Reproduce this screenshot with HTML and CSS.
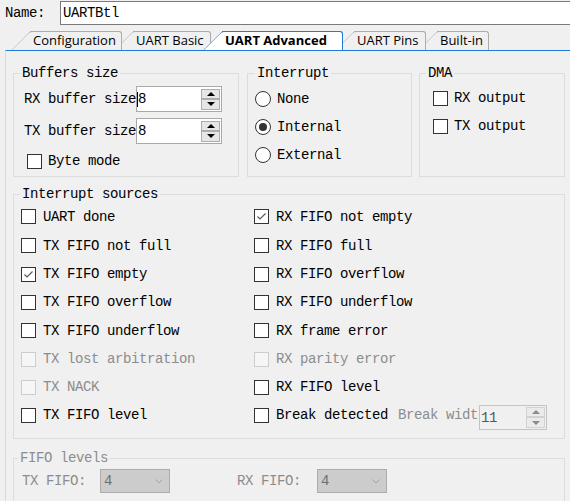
FILE: index.html
```html
<!DOCTYPE html>
<html>
<head>
<meta charset="utf-8">
<link rel="stylesheet" href="styles.css">
</head>
<body>
<div class="name-row">
  <span class="name-label">Name:</span>
  <div class="name-input">UARTBtl</div>
</div>
<div class="tabs">
  <div class="tab t1">Configuration</div>
  <div class="tab t2">UART Basic</div>
  <div class="tab t3 active">UART Advanced</div>
  <div class="tab t4">UART Pins</div>
  <div class="tab t5">Built-in</div>
</div>
<div class="panel">
  <div class="top-groups">
    <fieldset class="group buffers">
      <legend>Buffers size</legend>
      <div class="spin-row">
        <span class="spin-label">RX buffer size</span>
        <div class="spin"><span class="caret"></span><span class="val">8</span><div class="btns"><span class="btn up"></span><span class="btn down"></span></div></div>
      </div>
      <div class="spin-row">
        <span class="spin-label">TX buffer size</span>
        <div class="spin"><span class="val">8</span><div class="btns"><span class="btn up"></span><span class="btn down"></span></div></div>
      </div>
      <label class="check byte"><span class="cb"></span>Byte mode</label>
    </fieldset>
    <fieldset class="group interrupt">
      <legend>Interrupt</legend>
      <label class="radio-row"><span class="radio"></span>None</label>
      <label class="radio-row"><span class="radio on"></span>Internal</label>
      <label class="radio-row"><span class="radio"></span>External</label>
    </fieldset>
    <fieldset class="group dma">
      <legend>DMA</legend>
      <label class="check dma-row"><span class="cb"></span>RX output</label>
      <label class="check dma-row"><span class="cb"></span>TX output</label>
    </fieldset>
  </div>
  <fieldset class="group sources">
    <legend>Interrupt sources</legend>
    <div class="src-grid">
      <label class="check"><span class="cb"></span>UART done</label>
      <label class="check"><span class="cb on"><svg viewBox="0 0 13 13"><path d="M2.5 6.5 L5 9 L10.5 3.5"/></svg></span>RX FIFO not empty</label>
      <label class="check"><span class="cb"></span>TX FIFO not full</label>
      <label class="check"><span class="cb"></span>RX FIFO full</label>
      <label class="check"><span class="cb on"><svg viewBox="0 0 13 13"><path d="M2.5 6.5 L5 9 L10.5 3.5"/></svg></span>TX FIFO empty</label>
      <label class="check"><span class="cb"></span>RX FIFO overflow</label>
      <label class="check"><span class="cb"></span>TX FIFO overflow</label>
      <label class="check"><span class="cb"></span>RX FIFO underflow</label>
      <label class="check"><span class="cb"></span>TX FIFO underflow</label>
      <label class="check"><span class="cb"></span>RX frame error</label>
      <label class="check disabled"><span class="cb"></span>TX lost arbitration</label>
      <label class="check disabled"><span class="cb"></span>RX parity error</label>
      <label class="check disabled"><span class="cb"></span>TX NACK</label>
      <label class="check"><span class="cb"></span>RX FIFO level</label>
      <label class="check"><span class="cb"></span>TX FIFO level</label>
      <div class="break-row">
        <label class="check"><span class="cb"></span>Break detected</label>
        <span class="break-label">Break width</span>
        <div class="spin small disabled"><span class="val">11</span><div class="btns"><span class="btn up"></span><span class="btn down"></span></div></div>
      </div>
    </div>
  </fieldset>
  <fieldset class="group fifo">
    <legend>FIFO levels</legend>
    <div class="fifo-row">
      <span class="fifo-label tx">TX FIFO:</span>
      <div class="combo"><span>4</span><svg viewBox="0 0 8 5"><path d="M0.5 0.5 L4 4 L7.5 0.5"/></svg></div>
      <span class="fifo-label rx">RX FIFO:</span>
      <div class="combo"><span>4</span><svg viewBox="0 0 8 5"><path d="M0.5 0.5 L4 4 L7.5 0.5"/></svg></div>
    </div>
  </fieldset>
</div>
</body>
</html>
```
FILE: styles.css
```css
body {
  margin: 0;
  width: 570px;
  height: 501px;
  overflow: hidden;
  background: #f0f0f0;
  font-family: "Liberation Mono", monospace;
  font-size: 14px;
  letter-spacing: -0.4px;
  color: #000;
}

.name-row {
  display: flex;
  align-items: center;
  height: 24px;
  margin-top: 1px;
}
.name-label {
  flex: 0 0 60px;
  box-sizing: border-box;
  padding-left: 5px;
}
.name-input {
  flex: 0 0 530px;
  height: 24px;
  box-sizing: border-box;
  border: 1px solid #7a7a7a;
  background: #fff;
  padding-left: 2px;
  line-height: 22px;
}

/* tabs */
.tabs {
  display: flex;
  gap: 11px;
  height: 19px;
  margin-top: 6px;
  padding-left: 30px;
  font-family: "Open Sans", sans-serif;
  font-size: 13px;
  letter-spacing: 0;
}
.tab {
  position: relative;
  box-sizing: border-box;
  height: 19px;
  border-top: 1px solid #acacac;
  border-right: 1px solid #acacac;
  border-top-right-radius: 3px;
  background: #f0f0f0;
  padding-left: 3px;
  line-height: 17px;
  white-space: nowrap;
}
.tab::before {
  content: "";
  position: absolute;
  z-index: -1;
  top: -1px;
  left: 0;
  width: 26px;
  height: 19px;
  box-sizing: border-box;
  border-top: 1px solid #acacac;
  border-left: 1px solid #acacac;
  border-top-left-radius: 3px;
  background: inherit;
  transform: skewX(-45deg);
  transform-origin: top left;
}
.t1 { width: 92px; z-index: 5; }
.t2 { width: 78px; z-index: 4; }
.t3 { width: 121px; z-index: 10; }
.t4 { width: 72px; z-index: 2; }
.t5 { width: 52px; z-index: 1; }
.tab.active {
  background: #fff;
  border-color: #1e7bd8;
  font-weight: 700;
}
.tab.active::before {
  border-color: #1e7bd8;
}

/* panel */
.panel {
  margin-left: 5px;
  border-top: 1px solid #1e7bd8;
  border-left: 1px solid #d8d8d8;
  padding: 14px 0 0 7px;
  height: 460px;
}

.group {
  margin: 0;
  box-sizing: border-box;
  border: 1px solid #dcdcdc;
  min-width: 0;
}
.group legend {
  padding: 0 2px;
  line-height: 16px;
}

.top-groups {
  display: flex;
}
.buffers {
  width: 226px;
  height: 112px;
  margin-right: 8px;
  padding: 5px 0 0 10px;
}
.buffers legend { margin-left: -4px; }
.interrupt {
  width: 165px;
  height: 112px;
  margin-right: 7px;
  padding: 4px 0 0 7px;
}
.interrupt legend { margin-left: 0; }
.dma {
  width: 146px;
  height: 112px;
  padding: 3px 0 0 13px;
}
.dma legend { margin-left: -7px; }

.spin-row {
  display: flex;
  align-items: center;
  height: 26px;
  margin-bottom: 6px;
}
.spin-label {
  flex: 0 0 109px;
  white-space: nowrap;
}

.spin {
  position: relative;
  display: flex;
  align-items: center;
  box-sizing: border-box;
  width: 86px;
  height: 26px;
  border: 1px solid #a9a9a9;
  background: #fff;
  padding: 0 1px 0 1px;
}
.spin .val {
  flex: 1;
  padding-left: 0;
}
.caret {
  position: absolute;
  left: 0;
  top: 5px;
  width: 1px;
  height: 15px;
  background: #000;
}
.btns {
  display: flex;
  flex-direction: column;
  width: 19px;
}
.btn {
  box-sizing: border-box;
  height: 10px;
  border: 1px solid #adadad;
  background: #e6e6e6;
  display: flex;
  align-items: center;
  justify-content: center;
}
.btn.down { height: 11px; }
.btn.up::after {
  content: "";
  border-left: 4px solid transparent;
  border-right: 4px solid transparent;
  border-bottom: 4px solid #000;
}
.btn.down::after {
  content: "";
  border-left: 4px solid transparent;
  border-right: 4px solid transparent;
  border-top: 4px solid #000;
}

.spin.small {
  width: 68px;
  height: 25px;
  align-self: flex-end;
  margin-bottom: -1px;
}
.spin.disabled {
  background: #f0f0f0;
  border-color: #c4c4c4;
  color: #555;
}
.spin.disabled .btn {
  border-color: #d2d2d2;
  background: #ebebeb;
}
.spin.disabled .btn.up::after { border-bottom-color: #8a8a8a; }
.spin.disabled .btn.down::after { border-top-color: #8a8a8a; }

/* checkboxes / radios */
.check {
  display: flex;
  align-items: center;
  gap: 7px;
  white-space: nowrap;
}
.cb {
  flex: 0 0 15px;
  width: 15px;
  height: 15px;
  box-sizing: border-box;
  border: 1px solid #333;
  background: #fff;
  display: flex;
  align-items: center;
  justify-content: center;
}
.cb svg {
  width: 13px;
  height: 13px;
  fill: none;
  stroke: #5a5a5a;
  stroke-width: 1.2;
}
.check.disabled {
  color: #8c8c8c;
}
.check.disabled .cb {
  border-color: #cdcdcd;
  background: #f6f6f6;
}
.byte {
  margin-left: 3px;
  margin-top: 9px;
  gap: 6px;
}
.dma-row {
  height: 28px;
  gap: 6px;
}

.radio-row {
  display: flex;
  align-items: center;
  gap: 6px;
  height: 28px;
}
.radio {
  flex: 0 0 16px;
  width: 16px;
  height: 16px;
  box-sizing: border-box;
  border: 1px solid #333;
  border-radius: 50%;
  background: #fff;
  display: flex;
  align-items: center;
  justify-content: center;
}
.radio.on::after {
  content: "";
  width: 8px;
  height: 8px;
  border-radius: 50%;
  background: #333;
}

/* interrupt sources */
.sources {
  width: 552px;
  height: 253px;
  margin-top: 9px;
  padding: 0 0 0 7px;
}
.sources legend { margin-left: -1px; }
.src-grid {
  display: grid;
  grid-template-columns: 233px 1fr;
  grid-template-rows: 29px 29px 28px 28px 29px 28px 28px 28px;
}
.break-row {
  display: flex;
  align-items: center;
}
.break-label {
  flex: 0 0 81px;
  margin-left: 10px;
  overflow: hidden;
  white-space: nowrap;
  color: #8c8c8c;
}

/* fifo levels */
.fifo {
  width: 552px;
  height: 60px;
  margin-top: 11px;
  padding: 3px 0 0 8px;
  color: #8c8c8c;
}
.fifo legend { margin-left: -4px; }
.fifo-row {
  display: flex;
  align-items: center;
}
.fifo-label {
  white-space: nowrap;
}
.fifo-label.tx { flex: 0 0 78px; }
.fifo-label.rx { flex: 0 0 80px; margin-left: 67px; }
.combo {
  width: 70px;
  height: 24px;
  box-sizing: border-box;
  border: 1px solid #adadad;
  background: #cccccc;
  display: flex;
  align-items: center;
  justify-content: space-between;
  padding: 0 6px 0 3px;
  color: #6e6e6e;
}
.combo svg {
  width: 8px;
  height: 5px;
  fill: none;
  stroke: #a4a4a4;
  stroke-width: 1;
}
```
